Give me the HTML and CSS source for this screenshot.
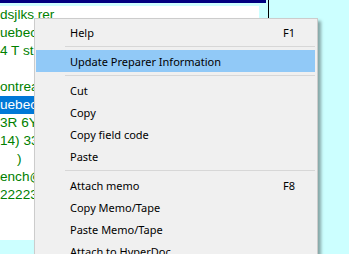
FILE: index.html
```html
<!DOCTYPE html>
<html>
<head>
<meta charset="utf-8">
<link rel="stylesheet" href="styles.css">
</head>
<body>
<div class="screen">
  <div class="titlebar"></div>
  <div class="gap"></div>
  <div class="field">
    <div class="line">dsjlks rer</div>
    <div class="line">uebec</div>
    <div class="line">4 T st.</div>
    <div class="line"></div>
    <div class="line">ontreal</div>
    <div class="line"><span class="sel">uebec</span></div>
    <div class="line">3R 6Y7</div>
    <div class="line">14) 333</div>
    <div class="line indent">)</div>
    <div class="line">ench@</div>
    <div class="line">22223</div>
  </div>
  <div class="vline"></div>
  <div class="menu">
    <div class="item"><span>Help</span><span class="key">F1</span></div>
    <div class="sep"></div>
    <div class="item active"><span>Update Preparer Information</span></div>
    <div class="sep"></div>
    <div class="item"><span>Cut</span></div>
    <div class="item"><span>Copy</span></div>
    <div class="item"><span>Copy field code</span></div>
    <div class="item"><span>Paste</span></div>
    <div class="sep"></div>
    <div class="item"><span>Attach memo</span><span class="key">F8</span></div>
    <div class="item"><span>Copy Memo/Tape</span></div>
    <div class="item"><span>Paste Memo/Tape</span></div>
    <div class="item"><span>Attach to HyperDoc</span></div>
  </div>
</div>
</body>
</html>
```

FILE: styles.css
```css
html, body {
  margin: 0;
  padding: 0;
}
body {
  background: #ccffff;
  width: 349px;
  height: 254px;
  overflow: hidden;
}
.screen {
  position: relative;
  width: 349px;
  height: 254px;
  overflow: hidden;
}
.titlebar {
  width: 266px;
  height: 3px;
  background: #000080;
}
.gap {
  height: 3px;
}
.field {
  width: 259px;
  height: 234px;
  background: #ffffff;
  font-family: "Liberation Sans", Arial, sans-serif;
  font-size: 13.6px;
  color: #008000;
  overflow: hidden;
}
.line {
  height: 18px;
  line-height: 18px;
  white-space: nowrap;
}
.indent {
  padding-left: 17px;
}
.sel {
  background: #0078d7;
  color: #ffffff;
  display: inline-block;
  height: 18px;
  padding-right: 10px;
}
.vline {
  position: absolute;
  left: 268px;
  top: 0;
  width: 1px;
  height: 30px;
  background: #000000;
}
.menu {
  position: absolute;
  left: 34px;
  top: 18px;
  width: 282px;
  height: 260px;
  background: #f0f0f0;
  border: 1px solid #cccccc;
  box-shadow: 3px 3px 3px rgba(0, 0, 0, 0.35);
  padding: 2px 0;
  font-family: "Noto Sans", "Segoe UI", sans-serif;
  font-size: 11px;
  color: #000000;
}
.item {
  display: flex;
  justify-content: space-between;
  align-items: center;
  height: 22px;
  padding: 0 20px 0 34px;
  margin: 0 2px 0 1px;
}
.item.active {
  background: #91c9f7;
}
.sep {
  height: 1px;
  background: #d7d7d7;
  margin: 3px 2px 3px 30px;
}
```
